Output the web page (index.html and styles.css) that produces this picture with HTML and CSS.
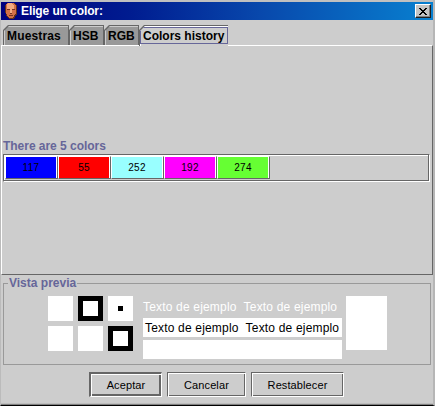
FILE: index.html
```
<!DOCTYPE html>
<html lang="es">
<head>
<meta charset="utf-8">
<title>Elige un color:</title>
<link rel="stylesheet" href="styles.css">
</head>
<body>
<div class="window">
  <header class="titlebar">
    <svg class="face" width="14" height="18" viewBox="0 0 14 18" shape-rendering="crispEdges">
      <path fill="#643018" d="M3 1h7l3 3v8l-3 5H5l-3-4-1-4V4z"/>
      <path fill="#d47048" d="M3 1h7l2 3v7l-3 5H5l-3-5V4z"/>
      <path fill="#f4aa80" d="M4 1h4l2 3v3H8v5H6V8H3V3z"/>
      <path fill="#7a3420" d="M3 7h3v1H3zM8 7h3v1H8zM5 13h4v1H5zM6 11h2v1H6z"/>
    </svg>
    <h1 class="title">Elige un color:</h1>
    <button class="close" aria-label="Cerrar"><svg width="8" height="7" viewBox="0 0 8 7" shape-rendering="crispEdges"><path d="M0 0h2v1h1v1h2V1h1V0h2v1H7v1H6v1H5v1h1v1h1v1h1v1H6V6H5V5H3v1H2v1H0V6h1V5h1V4h1V3H2V2H1V1H0z"/></svg></button>
  </header>
  <nav class="tabs">
    <div class="tab t1">Muestras</div>
    <div class="tab t2">HSB</div>
    <div class="tab t3">RGB</div>
    <div class="tab t4 selected">Colors history</div>
  </nav>
  <main class="panel">
    <h2 class="heading">There are 5 colors</h2>
    <div class="history">
      <div class="cell blue">117</div>
      <div class="cell red">55</div>
      <div class="cell cyan">252</div>
      <div class="cell magenta">192</div>
      <div class="cell green">274</div>
    </div>
  </main>
  <section class="preview">
    <h2 class="legend">Vista previa</h2>
    <div class="squares">
      <i></i><i class="ring"></i><i class="dot"></i>
      <i></i><i></i><i class="ring"></i>
    </div>
    <div class="samples">
      <p class="sample light"><span>Texto de ejemplo</span><span>Texto de ejemplo</span></p>
      <p class="sample filled"><span>Texto de ejemplo</span><span>Texto de ejemplo</span></p>
      <p class="sample filled"></p>
    </div>
    <div class="swatch"></div>
  </section>
  <footer class="buttons">
    <button class="btn accept">Aceptar</button>
    <button class="btn cancel">Cancelar</button>
    <button class="btn reset">Restablecer</button>
  </footer>
</div>
</body>
</html>
```
FILE: styles.css
```
* { box-sizing: border-box; }
body {
  margin: 0;
  background: #cdcdcd;
  font-family: "Liberation Sans", Arial, sans-serif;
  font-size: 12px;
  line-height: 14px;
  color: #000;
}
h1, h2, p { margin: 0; font-size: 12px; }
button { margin: 0; padding: 0; font-family: inherit; color: #000; }
.window {
  width: 435px;
  height: 406px;
  padding-top: 2px;
  border-left: 1px solid #bbb;
  border-right: 2px solid #b6b6b6;
  border-bottom: 1px solid #000;
  box-shadow: inset 0 -1px #808080, inset 0 -2px #bdbdbd, inset 0 2px #c0c0c0;
}
.titlebar {
  display: flex;
  align-items: center;
  height: 18px;
  padding: 0 2px 0 3px;
  background: linear-gradient(90deg, #00007f, #001c90 30%, #0848ac 60%, #0880d0);
}
.face { margin-right: 3px; }
.title { flex: 1; color: #fff; letter-spacing: -0.1px; }
.close {
  display: grid;
  place-items: center;
  width: 16px;
  height: 14px;
  background: #c4c4c4;
  border: 1px solid;
  border-color: #fff #202020 #202020 #fff;
  box-shadow: inset -1px -1px #808080;
}
.tabs {
  display: flex;
  height: 25px;
  padding: 5px 0 0 2px;
}
.tab {
  position: relative;
  z-index: 0;
  height: 20px;
  padding: 4px 0 0 4px;
  background: #666;
  clip-path: polygon(5px 0, 100% 0, 100% 100%, 0 100%, 0 5px);
  font-weight: bold;
  white-space: nowrap;
}
.tab::before {
  content: "";
  position: absolute;
  z-index: -1;
  inset: 1px 1px 0 1px;
  background: #999;
  border-top: 1px solid #ccc;
  border-left: 1px solid #ccc;
  clip-path: polygon(5px 0, 100% 0, 100% 100%, 0 100%, 0 5px);
}
.t1 { width: 66px; letter-spacing: 0.15px; }
.t2 { width: 35px; }
.t3 { width: 35px; }
.t4 { width: 89px; }
.tab.selected { height: 21px; }
.tab.selected::before {
  inset: 1px 0 0 1px;
  background: #cdcdcd;
  border-color: #fff;
}
.tab.selected::after {
  content: "";
  position: absolute;
  inset: 2px 0 2px 1px;
  border: 1px solid #666699;
  clip-path: polygon(4px 0, 100% 0, 100% 100%, 0 100%, 0 4px);
}
.panel {
  height: 230px;
  border: 1px solid;
  border-color: #fff #666 #666 #fff;
  padding: 93px 2px 0 1px;
}
.heading { height: 15px; color: #666699; letter-spacing: -0.03px; }
.history {
  display: flex;
  width: 427px;
  height: 28px;
  border: 1px solid;
  border-color: #666 #fff #fff #666;
  box-shadow: inset -1px -1px #666, inset 1px 1px #fff;
  padding: 1px;
}
.cell {
  width: 53px;
  height: 23px;
  padding-right: 1px;
  border: 1px solid;
  border-color: #fff #666 #666 #fff;
  box-shadow: inset -1px 0 #fff;
  font-size: 10px;
  line-height: 22px;
  letter-spacing: 0.3px;
  text-align: center;
}
.blue { background: #00f; }
.red { background: #f00; }
.cyan { background: #9ff; }
.magenta { background: #f0f; }
.green { background: #6f3; }
.preview {
  position: relative;
  display: flex;
  align-items: flex-start;
  height: 82px;
  margin: 8px 2px 0 2px;
  padding: 12px 0 0 44px;
  border: 1px solid #999;
}
.legend {
  position: absolute;
  top: -8px;
  left: 4px;
  padding: 0 1px;
  background: #cdcdcd;
  color: #666699;
}
.squares {
  display: grid;
  grid-template-columns: repeat(3, 25px);
  gap: 5px;
}
.squares i { height: 25px; background: #fff; }
.squares .ring { border: 5px solid #000; }
.squares .dot { border: 10px solid #fff; background: #000; }
.samples { width: 199px; margin: 0 4px 0 10px; }
.sample {
  display: flex;
  gap: 7px;
  height: 19px;
  margin-bottom: 3px;
  padding: 3px 0 0 2px;
  white-space: nowrap;
  letter-spacing: 0.18px;
}
.light { color: #fff; padding: 4px 0 0 0; }
.filled { background: #fff; }
.swatch { width: 41px; height: 54px; background: #fff; }
.buttons { display: flex; padding: 7px 0 0 88px; }
.btn {
  height: 25px;
  background: #cdcdcd;
  border: 1px solid;
  border-color: #666 #fff #fff #666;
  box-shadow: inset 1px 1px #fff, inset -1px -1px #666;
  font-size: 11px;
  line-height: 22px;
  letter-spacing: 0.1px;
}
.accept { width: 73px; margin-right: 5px; border-width: 2px 1px 1px 2px; box-shadow: inset 1px 1px #fff, inset -2px -2px #666; }
.cancel { width: 79px; margin-right: 5px; }
.reset { width: 93px; }
```
